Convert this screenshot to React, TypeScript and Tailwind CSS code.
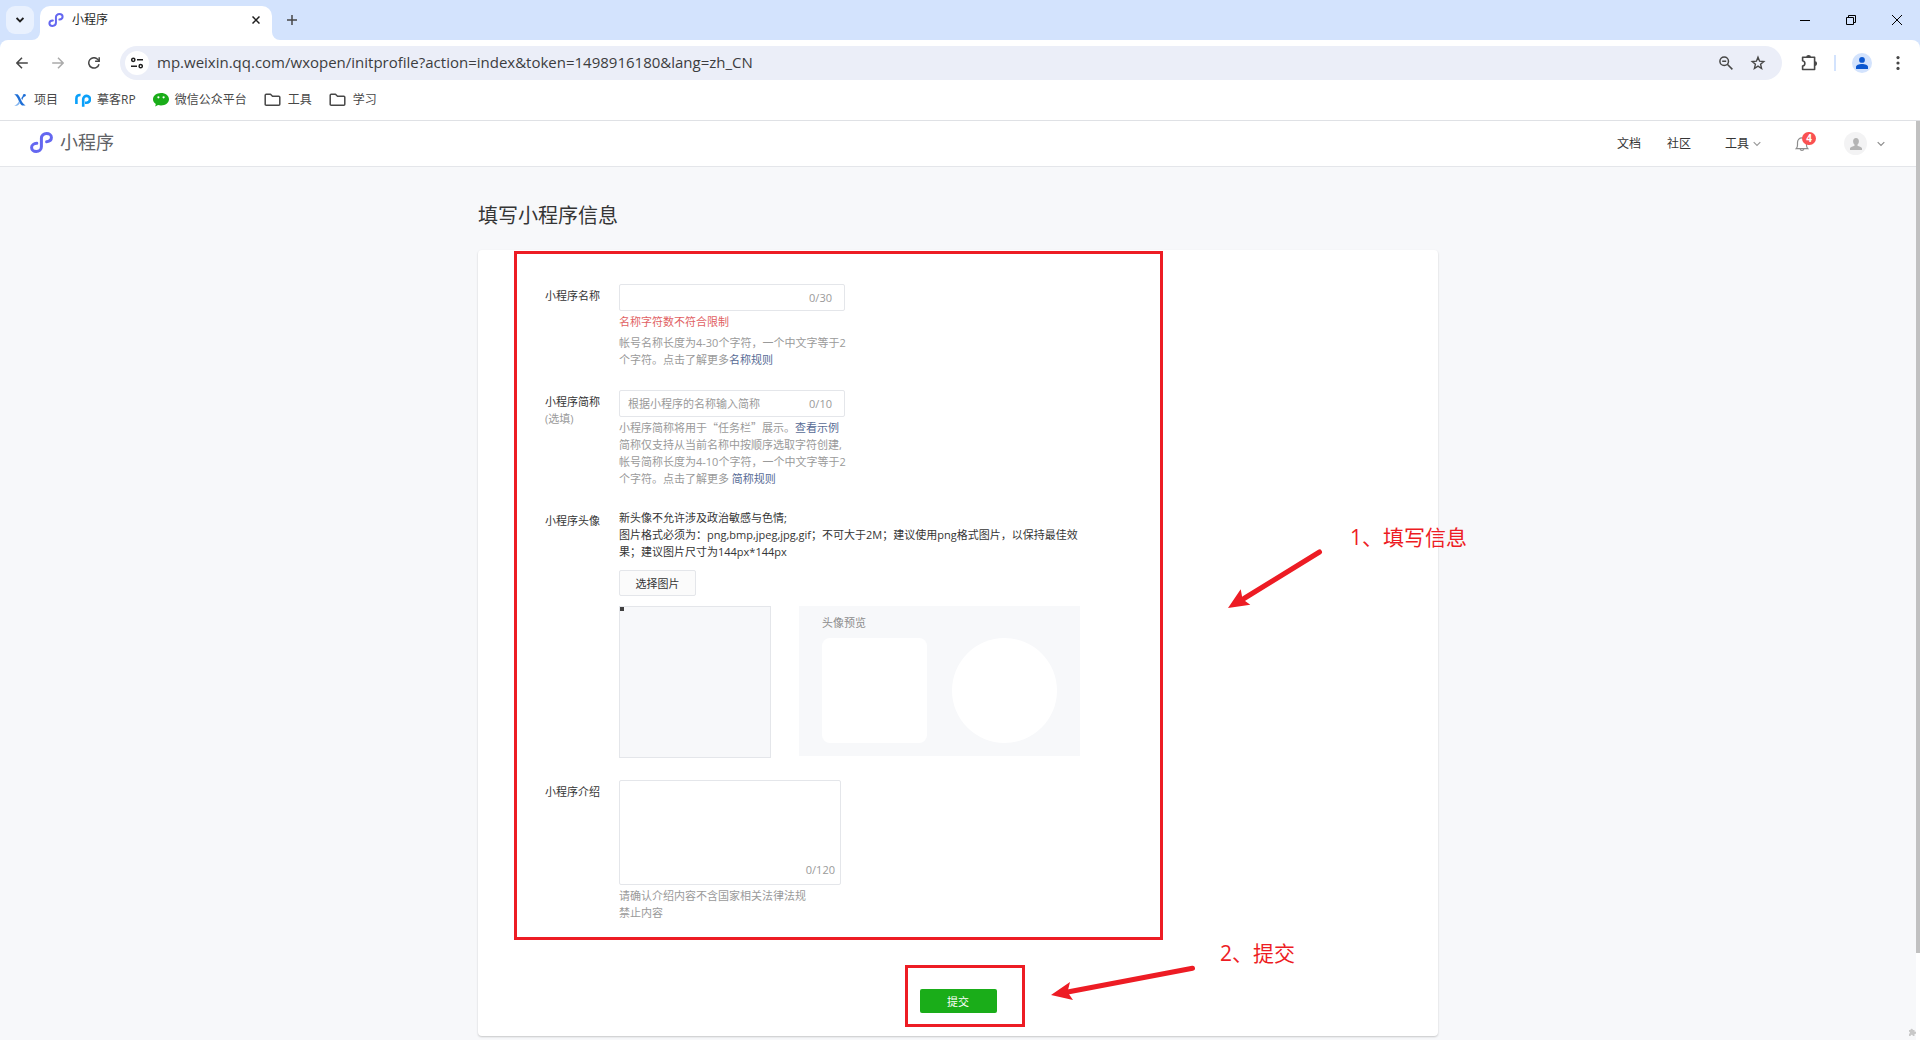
import type { ReactNode } from 'react';

const bookmarks = [
  {
    title: '项目',
    icon: (
      <svg className="w-4 h-4" viewBox="0 0 16 16" fill="none">
        <path d="M2.200 2.200h3.400c1.600 1.600 2.400 3.400 3.400 5.600 1 2.400 2.200 4.200 4.600 5.800H10c-1.600-1.400-2.600-3.200-3.500-5.300C5.500 5.900 4.500 3.900 2.200 2.200Z" fill="#1f6fd6" />
        <path d="M13.600 2.200c-1.900.7-3.500 2.200-4.300 4l.9 2c.6-1.900 1.600-3.600 3.400-6Z" fill="#1f6fd6" />
        <path d="M2.200 13.800C4.500 12.800 6 11.200 6.900 9.200l1.100 1.900c-.9 1.300-1.900 2.200-3 2.700Z" fill="#7fb2ee" />
        <circle cx="12.300" cy="3.300" r="1.400" fill="#1f6fd6" />
      </svg>
    ),
  },
  {
    title: '摹客RP',
    icon: (
      <svg className="w-4 h-4" viewBox="0 0 16 16" fill="none" stroke="#0aa0fa" strokeWidth="2.600">
        <path d="M1.400 12V6.500C1.400 4 2.800 2.800 5.600 3" />
        <path d="M8.200 14.800V7a3.400 3.400 0 1 1 3.400 3.700H10" />
      </svg>
    ),
  },
  {
    title: '微信公众平台',
    icon: (
      <svg className="w-4 h-4" viewBox="0 0 16 16">
        <path d="M8 1C3.500 1 0 3.800 0 7.300c0 2 1.100 3.700 2.800 4.800l-.6 2.400 2.900-1.500c.9.3 1.900.4 2.900.4 4.500 0 8-2.700 8-6.200S12.500 1 8 1Z" fill="#1aad19" />
        <circle cx="5.400" cy="5.300" r="1.100" fill="#fff" />
        <circle cx="10.600" cy="5.300" r="1.100" fill="#fff" />
      </svg>
    ),
  },
  { title: '工具', icon: <FolderIcon /> },
  { title: '学习', icon: <FolderIcon /> },
];

function FolderIcon() {
  return (
    <svg className="w-[18px] h-4" viewBox="0 0 18 16" fill="none" stroke="#474747" strokeWidth="1.500">
      <path strokeLinejoin="round" d="M1.200 3.200c0-.6.400-1 1-1h4.300l2 2h6.300c.6 0 1 .4 1 1v7.100c0 .6-.4 1-1 1H2.200c-.6 0-1-.4-1-1Z" />
    </svg>
  );
}

function MiniProgramLogo({ className }: { className: string }) {
  return (
    <svg className={className} viewBox="0 0 23 21" fill="none" stroke="#6467f0" strokeWidth="3" strokeLinecap="round">
      <path d="M6.800 11.300C3.800 11.500 1.600 13.200 1.600 15.400c0 2.300 2 4 4.600 4 3 0 5.200-1.900 5.200-4.700V6.300c0-2.800 2.200-4.700 5.200-4.700 2.700 0 4.800 1.600 4.800 3.900 0 2.200-2 3.900-4.800 4.300" />
    </svg>
  );
}

function ChevronDown({ className }: { className: string }) {
  return (
    <svg className={className} viewBox="0 0 8 8" fill="none" stroke="currentColor" strokeWidth="1.200">
      <path d="M.7 2.200 4 5.500l3.300-3.300" />
    </svg>
  );
}

function TabStrip() {
  return (
    <div className="flex h-10 pl-[6px] pt-[6px]">
      <button aria-label="搜索标签页" className="flex w-7 h-7 items-center justify-center rounded-[9px] bg-[#e9f1fe]">
        <svg className="w-2 h-2" viewBox="0 0 8 8" fill="none" stroke="#1f1f1f" strokeWidth="1.800">
          <path d="m.6 2 3.400 3.400L7.400 2" />
        </svg>
      </button>
      <div className="relative ml-[6px] flex w-[232px] items-center rounded-t-[10px] bg-white px-2 pb-[6px]">
        <svg className="absolute -left-2 bottom-0 w-2 h-2" viewBox="0 0 8 8">
          <path d="M8 0v8H0a8 8 0 0 0 8-8Z" fill="#fff" />
        </svg>
        <svg className="absolute -right-2 bottom-0 w-2 h-2" viewBox="0 0 8 8">
          <path d="M0 0v8h8a8 8 0 0 1-8-8Z" fill="#fff" />
        </svg>
        <MiniProgramLogo className="w-4 h-[14px]" />
        <span className="ml-2 grow text-xs text-[#1f1f1f]">小程序</span>
        <button aria-label="关闭标签页" className="flex w-4 h-4 items-center justify-center">
          <svg className="w-2 h-2" viewBox="0 0 8 8" stroke="#1f1f1f" strokeWidth="1.500">
            <path d="m.5.5 7 7m0-7-7 7" />
          </svg>
        </button>
      </div>
      <button aria-label="新标签页" className="ml-[6px] flex w-7 h-7 items-center justify-center">
        <svg className="w-[10px] h-[10px]" viewBox="0 0 10 10" stroke="#474747" strokeWidth="1.500">
          <path d="M5 0v10M0 5h10" />
        </svg>
      </button>
      <div className="ml-auto -mt-[6px] flex">
        <button aria-label="最小化" className="flex w-[46px] items-center justify-center">
          <svg className="w-[10px] h-[10px]" viewBox="0 0 10 10" stroke="#000">
            <path d="M0 5.500h10" />
          </svg>
        </button>
        <button aria-label="还原" className="flex w-[46px] items-center justify-center">
          <svg className="w-[10px] h-[10px]" viewBox="0 0 10 10" fill="none" stroke="#000">
            <path d="M.5 2.500h7v7h-7ZM2.500 2.500v-2h7v7h-2" />
          </svg>
        </button>
        <button aria-label="关闭" className="flex w-[46px] items-center justify-center">
          <svg className="w-[10px] h-[10px]" viewBox="0 0 10 10" stroke="#000">
            <path d="m0 0 10 10M10 0 0 10" />
          </svg>
        </button>
      </div>
    </div>
  );
}

function Toolbar() {
  return (
    <div className="flex h-[46px] items-center pl-2 pr-3">
      <div className="flex gap-2">
        <button aria-label="后退" className="flex w-7 h-7 items-center justify-center">
          <svg className="w-3 h-3" viewBox="0 0 12 12" fill="none" stroke="#474747" strokeWidth="1.500">
            <path d="M11.800 6H1M6 .8.900 6 6 11.200" />
          </svg>
        </button>
        <button aria-label="前进" className="flex w-7 h-7 items-center justify-center">
          <svg className="w-3 h-3" viewBox="0 0 12 12" fill="none" stroke="#ababab" strokeWidth="1.500">
            <path d="M.2 6H11M6 .8 11.100 6 6 11.200" />
          </svg>
        </button>
        <button aria-label="重新加载" className="flex w-7 h-7 items-center justify-center">
          <svg className="w-3 h-3" viewBox="0 0 12 12" fill="none" stroke="#474747" strokeWidth="1.500">
            <path d="M11 7.200A5.200 5.200 0 1 1 10 2.600L11 3.800" />
            <path d="M11.200.2v4.100H7.100" />
          </svg>
        </button>
      </div>
      <div className="ml-3 flex h-[34px] grow items-center rounded-full bg-[#ebeef8] pl-[5px] pr-4">
        <button aria-label="查看网站信息" className="flex w-6 h-6 items-center justify-center rounded-full bg-white">
          <svg className="w-3 h-3" viewBox="0 0 12 12" fill="none" stroke="#1f1f1f" strokeWidth="1.500">
            <circle cx="2.300" cy="2.800" r="1.600" />
            <path d="M6 2.800h6M0 9.200h6" />
            <circle cx="9.700" cy="9.200" r="1.600" />
          </svg>
        </button>
        <input
          aria-label="地址"
          className="ml-2 grow bg-transparent pb-[2px] text-[15px] text-[#3c3d40] outline-none"
          defaultValue="mp.weixin.qq.com/wxopen/initprofile?action=index&token=1498916180&lang=zh_CN"
        />
        <button aria-label="缩放" className="flex w-4 h-4 items-center justify-center">
          <svg className="w-[14px] h-[14px]" viewBox="0 0 14 14" fill="none" stroke="#474747" strokeWidth="1.500">
            <circle cx="5.200" cy="5.200" r="4.300" />
            <path d="M8.300 8.300 13.400 13.400M3.200 5.200h4" />
          </svg>
        </button>
        <button aria-label="收藏" className="ml-4 flex w-4 h-4 items-center justify-center">
          <svg className="w-4 h-4" viewBox="0 0 16 16" fill="none" stroke="#474747" strokeWidth="1.400">
            <path d="m8 2.200 1.600 4 4.200.3-3.200 2.800 1 4.200L8 11.200l-3.600 2.300 1-4.200-3.200-2.800 4.200-.3Z" />
          </svg>
        </button>
      </div>
      <button aria-label="扩展程序" className="ml-[18px] flex w-[18px] h-[18px] items-center justify-center">
        <svg className="w-[18px] h-[18px]" viewBox="0 0 18 18" fill="none" stroke="#474747" strokeWidth="1.600" strokeLinejoin="round">
          <path d="M2.600 3.300h12v12.200h-12V12c3-.6 3-4.600 0-5.200Z" />
          <path d="M7 3a1.600 1.300 0 0 1 3.200 0M15 8a1.300 1.600 0 0 1 0 3.200" fill="#474747" />
        </svg>
      </button>
      <span className="ml-4 h-4 w-[2px] bg-[#d3e3fd]" />
      <button aria-label="用户" className="ml-4 flex w-5 h-5 items-center justify-center rounded-full bg-[#d3e3fd]">
        <svg className="w-3 h-3" viewBox="0 0 12 12" fill="#0b57d0">
          <circle cx="6" cy="2.900" r="2.900" />
          <path d="M0 12V9.900C0 8 2.900 7 6 7s6 1 6 2.900V12Z" />
        </svg>
      </button>
      <button aria-label="菜单" className="ml-4 flex w-5 h-5 items-center justify-center">
        <svg className="w-1 h-[14px]" viewBox="0 0 4 14" fill="#474747">
          <circle cx="2" cy="1.600" r="1.600" />
          <circle cx="2" cy="7" r="1.600" />
          <circle cx="2" cy="12.400" r="1.600" />
        </svg>
      </button>
    </div>
  );
}

function SiteHeader() {
  return (
    <header className="flex h-[46px] items-center border-b border-[#e4e6ea] bg-white pl-[30px] pr-[31px]">
      <a href="#" className="flex items-center gap-[7px] pb-[3px] text-lg text-[#606266]">
        <MiniProgramLogo className="w-[23px] h-[21px]" />
        小程序
      </a>
      <nav className="ml-auto flex items-center text-xs text-[#353535]">
        <a href="#">文档</a>
        <a href="#" className="ml-[26px]">社区</a>
        <a href="#" className="ml-[34px] flex items-center gap-1">
          工具
          <ChevronDown className="w-2 h-2 text-[#9a9a9a]" />
        </a>
        <a href="#" aria-label="通知" className="relative ml-[34px] flex">
          <svg className="w-[14px] h-4" viewBox="0 0 14 16" fill="none" stroke="#8c8c8c" strokeWidth="1.200">
            <path d="M1.200 12.700c1-.9 1.300-2 1.300-3.700V6.500C2.500 3.600 4.500 1.800 7 1.800s4.500 1.800 4.500 4.700V9c0 1.700.3 2.800 1.300 3.700ZM5.200 13.300c.3 1.300 3.300 1.300 3.600 0" />
          </svg>
          <span className="absolute -top-1 left-[7px] flex w-[14px] h-[13px] items-center justify-center rounded-full bg-[#fa5151] text-[10px] font-bold leading-none text-white">
            4
          </span>
        </a>
        <a href="#" aria-label="账号" className="ml-[35px] flex items-center gap-[10px]">
          <span className="flex w-[23px] h-[23px] items-center justify-center rounded-full bg-[#f3f3f4]">
            <svg className="w-3 h-3" viewBox="0 0 12 12" fill="#b4b4b4">
              <path d="M6 0c1.900 0 2.900 1.300 2.900 3.200 0 1.400-.6 2.700-1.400 3.400v1.100c1.300.7 4.500 1.300 4.500 2.900V12H0v-1.400c0-1.600 3.200-2.200 4.500-2.900V6.600C3.700 5.900 3.100 4.600 3.100 3.200 3.100 1.300 4.100 0 6 0Z" />
            </svg>
          </span>
          <ChevronDown className="w-2 h-2 text-[#8c8c8c]" />
        </a>
      </nav>
    </header>
  );
}

function FormRow({ id, label, note, children }: { id: string; label: string; note?: string; children: ReactNode }) {
  return (
    <div className="flex">
      <label htmlFor={id} className="w-[74px] shrink-0 pt-[3px]">
        {label}
        {note && <span className="block text-[#9a9a9a]">{note}</span>}
      </label>
      <div>{children}</div>
    </div>
  );
}

function CountedInput({ id, max, placeholder }: { id: string; max: number; placeholder?: string }) {
  return (
    <div className="flex w-[226px] h-[27px] items-center rounded-xs border border-[#e4e6ea] pl-2 pr-3">
      <input id={id} maxLength={max} placeholder={placeholder} className="min-w-0 grow outline-none placeholder:text-[#9a9a9a]" />
      <span className="text-[#9a9a9a]">0/{max}</span>
    </div>
  );
}

// Red boxes, arrows and captions that sit on top of the form
function Annotations() {
  return (
    <div className="pointer-events-none absolute inset-0 text-[21px] leading-7 text-[#ed1c24]">
      <div className="absolute left-9 top-px w-[649px] h-[689px] border-3 border-[#ed1c24]" />
      <div className="absolute left-[427px] top-[715px] w-[120px] h-[62px] border-3 border-[#ed1c24]" />
      <svg className="absolute left-[750px] top-[298px] w-[96px] h-[62px]" viewBox="0 0 96 62" fill="#ed1c24">
        <path d="M91.500 4 16 50.500" stroke="#ed1c24" strokeWidth="5" strokeLinecap="round" />
        <path d="m0 60 12.700-18.700 1.500 8 2.500 3.500 5.600 4Z" />
      </svg>
      <svg className="absolute left-[573px] top-[714px] w-[148px] h-9" viewBox="0 0 148 36" fill="#ed1c24">
        <path d="M141.500 4.200 14 28.500" stroke="#ed1c24" strokeWidth="5" strokeLinecap="round" />
        <path d="m0 31 19-13-2.500 10L22 36Z" />
      </svg>
      <span className="absolute left-[872px] top-[273px] whitespace-nowrap">1、填写信息</span>
      <span className="absolute left-[742px] top-[689px] whitespace-nowrap">2、提交</span>
    </div>
  );
}

function ProfileForm() {
  return (
    <form className="relative rounded-sm bg-white pb-[23px] pt-[34px] text-[11px] leading-[17px] text-[#353535] shadow-[0_1px_2px_rgba(0,0,0,0.2)]">
      <div className="flex flex-col gap-[22px] pl-[67px]">
        <FormRow id="name" label="小程序名称">
          <CountedInput id="name" max={30} />
          <p className="mt-[2px] text-[#e15f63]">名称字符数不符合限制</p>
          <p className="mt-1 whitespace-nowrap text-[#9a9a9a]">
            帐号名称长度为4-30个字符，一个中文字等于2
            <br />
            个字符。点击了解更多<a href="#" className="text-[#576b95]">名称规则</a>
          </p>
        </FormRow>

        <FormRow id="short-name" label="小程序简称" note="(选填)">
          <CountedInput id="short-name" max={10} placeholder="根据小程序的名称输入简称" />
          <p className="mt-[2px] whitespace-nowrap text-[#9a9a9a]">
            小程序简称将用于<span className="font-['Noto_Sans_CJK_SC',sans-serif]">“任务栏”</span>展示。
            <a href="#" className="text-[#576b95]">查看示例</a>
            <br />
            简称仅支持从当前名称中按顺序选取字符创建,
            <br />
            帐号简称长度为4-10个字符，一个中文字等于2
            <br />
            个字符。点击了解更多 <a href="#" className="text-[#576b95]">简称规则</a>
          </p>
        </FormRow>

        <FormRow id="avatar" label="小程序头像">
          <p className="whitespace-nowrap">
            新头像不允许涉及政治敏感与色情;
            <br />
            图片格式必须为：png,bmp,jpeg,jpg,gif；不可大于2M；建议使用png格式图片，以保持最佳效
            <br />
            果；建议图片尺寸为144px*144px
          </p>
          <button id="avatar" type="button" className="mt-[10px] block w-[77px] h-[26px] rounded-xs border border-[#e4e6ea] bg-[#fbfbfb]">
            选择图片
          </button>
          <div className="mt-[10px] flex items-start gap-7">
            <div className="w-[152px] h-[152px] border border-[#e4e6ea] bg-[#f7f8fa]">
              <div className="w-1 h-1 border-2 border-[#404040]" />
            </div>
            <div className="w-[281px] h-[150px] bg-[#f7f8fa] px-[23px] pt-2 text-[#8d8d8d]">
              头像预览
              <div className="mt-[7px] flex gap-[25px]">
                <div className="w-[105px] h-[105px] rounded-lg bg-white" />
                <div className="w-[105px] h-[105px] rounded-full bg-white" />
              </div>
            </div>
          </div>
        </FormRow>

        <FormRow id="intro" label="小程序介绍">
          <div className="flex w-[222px] h-[105px] flex-col rounded-xs border border-[#e4e6ea] px-[5px] pb-[6px]">
            <textarea id="intro" maxLength={120} className="min-h-0 grow resize-none outline-none" />
            <span className="self-end text-[#9a9a9a]">0/120</span>
          </div>
          <p className="mt-[2px] whitespace-nowrap text-[#9a9a9a]">
            请确认介绍内容不含国家相关法律法规
            <br />
            禁止内容
          </p>
        </FormRow>
      </div>

      <button type="button" className="mx-auto mt-[68px] block w-[77px] h-6 rounded-xs bg-[#1aad19] text-white">
        提交
      </button>

      <Annotations />
    </form>
  );
}

export default function App() {
  return (
    <div className="flex min-h-screen flex-col bg-[#d3e3fd] font-['Open_Sans','Noto_Sans_CJK_SC',sans-serif]">
      <TabStrip />
      <div className="rounded-t-lg border-b border-[#dfe1e5] bg-white">
        <Toolbar />
        <div className="flex h-[34px] items-start gap-[17px] pl-3 pt-[6px]">
          {bookmarks.map((bookmark) => (
            <a key={bookmark.title} href="#" className="flex items-center gap-[6px] text-xs text-[#474747]">
              {bookmark.icon}
              {bookmark.title}
            </a>
          ))}
        </div>
      </div>

      <div className="flex grow bg-white">
        <div className="relative flex min-w-0 grow flex-col bg-[#f7f8fa]">
          <SiteHeader />
          <main className="mx-auto w-full max-w-[960px] pb-[3px] pt-[34px]">
            <h1 className="mb-[19px] text-xl leading-[30px] text-[#353535]">填写小程序信息</h1>
            <ProfileForm />
          </main>
          <svg className="absolute bottom-1 right-0 w-2 h-2" viewBox="0 0 8 8" fill="#c8c8c8">
            <path d="M1 2h1.500a1.200 1.200 0 1 1 2.400 0h1.600v1.700a1.200 1.200 0 1 1 0 2.300V8H4.700a1 1 0 1 0-1.900 0H1V5.800a1 1 0 1 0 0-2Z" />
          </svg>
        </div>
        <div className="w-1 shrink-0">
          <div className="h-[832px] bg-[#c1c1c1]" />
        </div>
      </div>
    </div>
  );
}
